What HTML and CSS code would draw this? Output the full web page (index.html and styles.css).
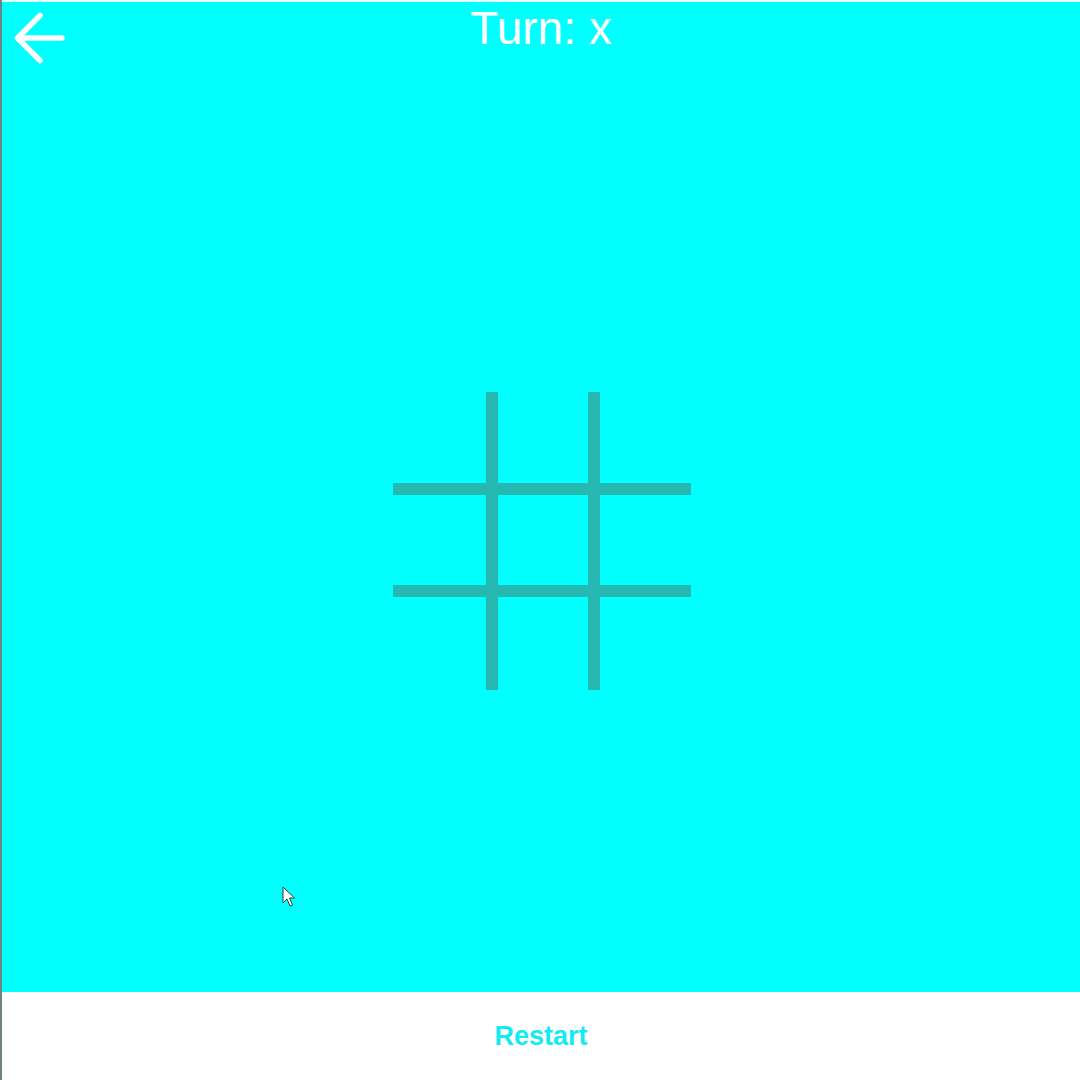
FILE: index.html
```html
<!DOCTYPE html>
<html lang="en">
<head>
<meta charset="utf-8">
<title>Tic Tac Toe</title>
<link rel="stylesheet" href="styles.css">
</head>
<body>
<div class="app">
  <main class="stage">
    <header class="topbar">
      <div class="back-cell">
        <button class="back" aria-label="Back">
          <svg class="back-icon" viewBox="0 0 52 52" width="52" height="52">
            <path d="M3.5 26 H48 M3.5 26 L26 3.5 M3.5 26 L26 48.5" fill="none" stroke="#ffffff" stroke-width="5.5" stroke-linecap="round" stroke-linejoin="round"/>
          </svg>
        </button>
      </div>
      <h1 class="turn">Turn: x</h1>
      <div></div>
    </header>
    <section class="board-area">
      <div class="board">
        <div class="cell"></div><div class="cell"></div><div class="cell"></div>
        <div class="cell"></div><div class="cell"></div><div class="cell"></div>
        <div class="cell"></div><div class="cell"></div><div class="cell"></div>
      </div>
    </section>
    <svg class="cursor" viewBox="0 0 13 22" width="13" height="22">
      <path d="M1 1 L1 17 L5 13 L8 20 L10.5 19 L7.5 12 L12.5 12 Z" fill="#ffffff" stroke="#2a3a3a" stroke-width="1" stroke-linejoin="round"/>
    </svg>
  </main>
  <footer class="footer">
    <button class="restart">Restart</button>
  </footer>
</div>
</body>
</html>
```
FILE: styles.css
```css
* { box-sizing: border-box; }
html, body { margin: 0; padding: 0; }
body {
  width: 1080px;
  height: 1080px;
  overflow: hidden;
  font-family: "Liberation Sans", Arial, sans-serif;
  background: #ffffff;
}
.app {
  height: 1080px;
  display: flex;
  flex-direction: column;
  border-left: 2px solid #6b8585;
}
.stage {
  flex: 1;
  position: relative;
  background: #00ffff;
  border-top: 2px solid #e8fefe;
  display: flex;
  flex-direction: column;
}
.topbar {
  height: 88px;
  display: grid;
  grid-template-columns: 1fr auto 1fr;
  align-items: start;
}
.back-cell {
  padding: 10px 0 0 12px;
}
.back {
  background: none;
  border: 0;
  padding: 0;
  margin: 0;
  display: block;
  cursor: pointer;
}
.back-icon { display: block; }
.turn {
  margin: 3px 0 0;
  font-size: 46px;
  line-height: 1;
  font-weight: 400;
  color: #ffffff;
}
.board-area {
  flex: 1;
  display: flex;
  align-items: center;
  justify-content: center;
  padding-left: 1px;
}
.board {
  display: grid;
  grid-template-columns: 93px 90px 91px;
  grid-template-rows: 91px 90px 93px;
  gap: 12px;
  background: #27b9b1;
}
.cell {
  background: #00ffff;
}
.cursor {
  position: absolute;
  left: 280px;
  top: 884px;
}
.footer {
  height: 88px;
  background: #ffffff;
  display: flex;
  align-items: center;
  justify-content: center;
}
.restart {
  background: none;
  border: 0;
  padding: 0;
  font-family: "Liberation Sans", Arial, sans-serif;
  font-weight: 700;
  font-size: 27px;
  color: #12eaf4;
  cursor: pointer;
}
```
